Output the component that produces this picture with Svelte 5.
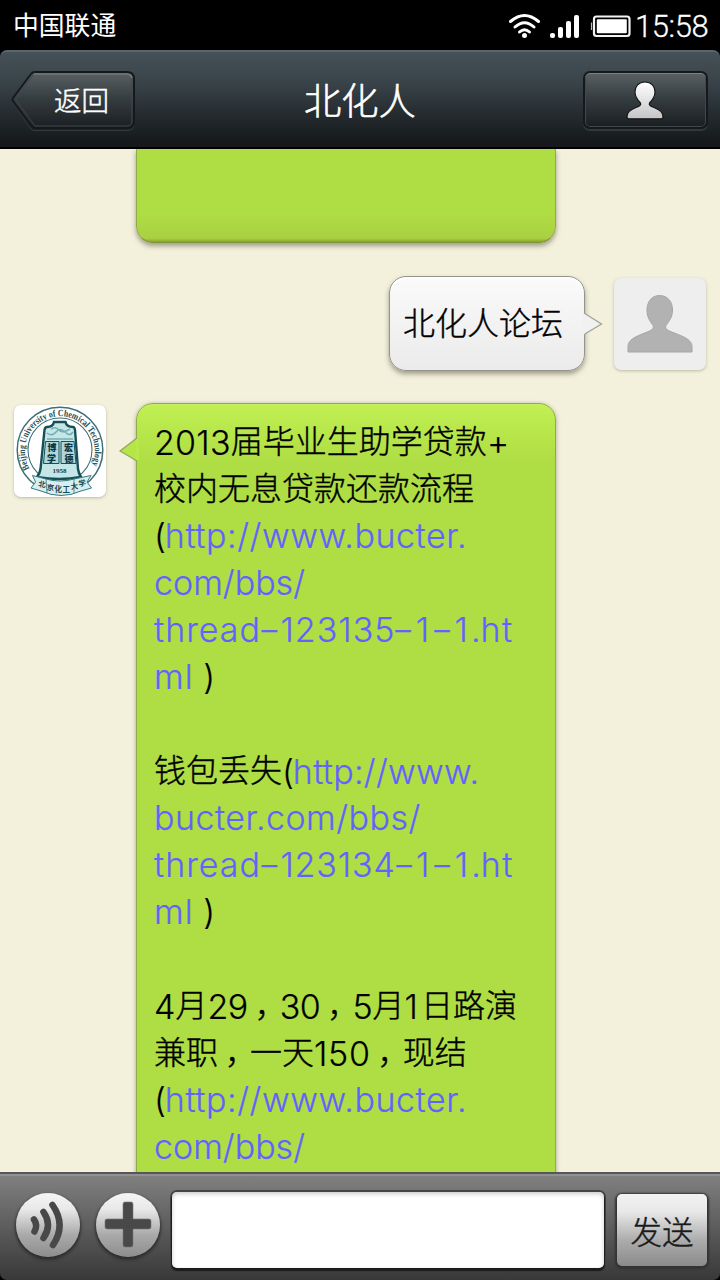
<script>
  // Each run is [text, kind, width]; kinds: c = Chinese, n = Latin text, a = link,
  // d = link dash, p = Chinese comma
  const thread = (id) => [
    ['thread', 'a', 107], ['-', 'd', 19], [id, 'a', 115], ['-', 'd', 20], ['1', 'a', 18],
    ['-', 'd', 20], ['1', 'a', 16], ['.', 'a', 10], ['ht', 'a', 33]
  ];
  const lines = [
    [['2013', 'n', 77], ['届毕业生助学贷款', 'c', 256], ['+', 'n', 22]],
    [['校内无息贷款还款流程', 'c', 320]],
    [['(', 'n', 11], ['http://www.bucter.', 'a', 302]],
    [['com/bbs/', 'a', 151]],
    thread('123135'),
    [['ml', 'a', 40], [' )', 'n', 21]],
    [],
    [['钱包丢失', 'c', 128], ['(', 'n', 11], ['http://www.', 'a', 186]],
    [['bucter.com/bbs/', 'a', 267]],
    thread('123134'),
    [['ml', 'a', 40], [' )', 'n', 21]],
    [],
    [['4', 'n', 21], ['月', 'c', 32], ['29', 'n', 40], ['，', 'p', 32], ['30', 'n', 41], ['，', 'p', 32], ['5', 'n', 20], ['月', 'c', 32], ['1', 'n', 16], ['日路演', 'c', 96]],
    [['兼职', 'c', 64], ['，', 'p', 32], ['一天', 'c', 64], ['150', 'n', 57], ['，', 'p', 32], ['现结', 'c', 64]],
    [['(', 'n', 11], ['http://www.bucter.', 'a', 302]],
    [['com/bbs/', 'a', 151]]
  ];

  // Spreads the letters of a run over the given width
  function fit(node, width) {
    const natural = node.offsetWidth;
    node.style.letterSpacing = (width - natural) / node.textContent.length + 'px';
  }
</script>

<div class="screen">
  <div class="status">
    <span class="carrier">中国联通</span>
    <svg class="signals" width="124" height="30" viewBox="508 12 124 30">
      <g fill="none" stroke="#fff" stroke-width="3" stroke-linecap="round">
        <path d="M510.500 21.500Q524.500 9.500 538.500 21.500" />
        <path d="M515 27Q524.500 18.500 534 27" />
        <path d="M519.500 32Q524.500 27.500 529.500 32" />
      </g>
      <circle cx="524.500" cy="35.500" r="2.500" fill="#fff" />
      <g fill="#fff">
        <rect x="550" y="33" width="5" height="5" rx="2" />
        <rect x="558" y="27" width="5" height="11" rx="2" />
        <rect x="566" y="21" width="5" height="17" rx="2" />
        <rect x="574" y="15" width="5" height="23" rx="2" />
      </g>
      <rect x="594" y="16.500" width="35.500" height="19.500" rx="2.500" fill="#000" stroke="#f4f4f4" stroke-width="2.200" />
      <rect x="596.800" y="19.200" width="30" height="14" rx="1" fill="#fff" />
      <path d="M591.500 22.500v7.500" stroke="#bbb" stroke-width="1.200" />
    </svg>
    <span class="clock" use:fit={73}>15:58</span>
  </div>

  <header>
    <button class="back" aria-label="返回">
      <svg width="126" height="64" viewBox="10 69 126 64">
        <defs>
          <linearGradient id="btn" x1="0" y1="0" x2="0" y2="1">
            <stop offset="0" stop-color="#596165" /><stop offset=".5" stop-color="#343b3f" /><stop offset="1" stop-color="#1a1e21" />
          </linearGradient>
        </defs>
        <path d="M34 73.500H127Q134 73.500 134 80V124Q134 130.500 127 130.500H34Q32 130.500 30.500 128L12 101Z" fill="none" stroke="#485156" stroke-opacity=".55" />
        <path d="M35 72H127Q134 72 134 79V121Q134 128 127 128H35Q32.500 128 31 126L13 101Q12 99.500 13 98L31 74Q32.500 72 35 72Z" fill="url(#btn)" stroke="#15191b" stroke-width="2" />
        <path d="M34 74H127Q131 74 132 78" fill="none" stroke="#7c8386" stroke-width="1.200" />
        <path d="M132 78V121Q132 126 127 126H35L15.500 99.500L33 75" fill="none" stroke="#41484c" />
      </svg>
      <span>返回</span>
    </button>
    <h1>北化人</h1>
    <button class="profile" aria-label="profile">
      <svg width="40" height="42" viewBox="0 0 40 42">
        <defs><linearGradient id="man" x1="0" y1="0" x2="0" y2="1"><stop stop-color="#fff" /><stop offset="1" stop-color="#c5c5c5" /></linearGradient></defs>
        <path d="M20 2C13.500 2 10 6.500 10 12C10 17 12.500 20 15.500 23C16.500 25 14.500 26 11 27.500C5 30 2 32 2 37Q2 38.800 4 38.800H36Q38 38.800 38 37C38 32 35 30 29 27.500C25.500 26 23.500 25 24.500 23C27.500 20 30 17 30 12C30 6.500 26.500 2 20 2Z" fill="url(#man)" stroke="#14181a" stroke-width="1.200" />
      </svg>
    </button>
  </header>

  <main>
    <div class="bubble green tail-end"></div>

    <div class="mine">
      <div class="bubble white">
        北化人论坛
        <svg class="tip" width="22" height="30" viewBox="0 0 22 30"><path d="M1 4L18.500 15L1 25.500" fill="#f1f1f1" stroke="#a3a39b" stroke-width="1.300" /><path d="M0 5V25" stroke="#f1f1f1" stroke-width="3" /></svg>
      </div>
      <div class="avatar plain">
        <svg width="92" height="92" viewBox="614 278 92 92">
          <path d="M659.500 295.500C651.500 295.500 647 302 647 310C647 317.500 650 321 653 325.500C654.500 329 651 330.500 646 332.500C634 337 628 340 628 347V352H692V347C692 340 685 337 673 332.500C668 330.500 664.500 329 666 325.500C669 321 672.500 317.500 672.500 310C672.500 302 668 295.500 659.500 295.500Z" fill="#b2b2b2" stroke="#a6a6a6" />
        </svg>
      </div>
    </div>

    <div class="theirs">
      <div class="avatar school">
        <svg width="92" height="92" viewBox="0 0 92 92">
          <defs><path id="ring" d="M15.500 63.500A35 35 0 1 1 74 67" /></defs>
          <circle cx="46" cy="45" r="42.800" fill="#fff" stroke="#3e7076" stroke-width="1.500" />
          <circle cx="46" cy="45" r="32" fill="#fff" stroke="#3e7076" stroke-width="1.100" />
          <text class="motto"><textPath href="#ring" textLength="142" lengthAdjust="spacingAndGlyphs">Beijing University of Chemical Technology</textPath></text>
          <path d="M33 22Q39 22 40 17H51.500Q52.500 22 59 22Q60.500 22 61 25L64 64Q64.500 68 67 72Q45 76 23 72Q26 68 26.500 64L30.500 25Q31 22 33 22Z" fill="#c5e6e7" stroke="#164f58" stroke-width="2.400" />
          <path d="M33 28q5 4 9-1t9 0t8 0M37 24q5-3 8 1t11-1M33 34H59" fill="none" stroke="#75aeb2" stroke-width="1.500" />
          <path d="M31.500 36.500H45V58.500H29.500ZM47 36.500H60L62 58.500H47Z" fill="#aed8da" stroke="#164f58" stroke-width="1" />
          <g class="seal"><text x="33.500" y="46">博</text><text x="33" y="56.500">学</text><text x="50" y="46">宏</text><text x="50.500" y="56.500">德</text></g>
          <text class="year" x="38.500" y="68" textLength="14">1958</text>
          <path d="M18.500 70.500L32 74Q46 78 60 74L77 70.500L73 77L77.500 83L67 86Q47 95 27 86L17 83L21.500 77Z" fill="#d7eef0" stroke="#367880" />
          <path d="M32 74L33 88M60 74L60 88.500" stroke="#367880" stroke-width=".8" />
          <g class="ribbon"><text x="24" y="81.500" transform="rotate(8 24 81.500)">北</text><text x="32.500" y="85" transform="rotate(5 32.500 85)">京</text><text x="40.500" y="86.500">化</text><text x="48.500" y="86.500">工</text><text x="57" y="84.500" transform="rotate(-7 57 84.500)">大</text><text x="65" y="81.500" transform="rotate(-10 65 81.500)">学</text></g>
        </svg>
      </div>
      <div class="bubble green long">
        <svg class="tail" width="22" height="30" viewBox="0 0 22 30"><path d="M20 3L3 16L20 26" fill="#b6e54a" stroke="#91a65c" stroke-width="1.200" /><path d="M20.500 4V25" stroke="#b7e94a" stroke-width="3" /></svg>
        {#each lines as line}
          <div class="line">{#each line as [text, kind, width]}<span class={kind} use:fit={width}>{text}</span>{/each}</div>
        {/each}
      </div>
    </div>
  </main>

  <footer>
    <button class="round" aria-label="voice">
      <svg width="64" height="64" viewBox="0 0 64 64"><g fill="none" stroke="#484848" stroke-width="6.500" stroke-linecap="round"><path d="M18 26.500Q22 32 18.500 38.500" /><path d="M27.500 19Q36.500 32 27.500 45" /><path d="M36.500 12Q50.500 32 37 52" /></g></svg>
    </button>
    <button class="round" aria-label="add">
      <svg width="64" height="64" viewBox="0 0 64 64"><path d="M29 9H35Q37 9 37 11V26H53Q55 26 55 28V34Q55 36 53 36H37V52Q37 54 35 54H29Q27 54 27 52V36H11Q9 36 9 34V28Q9 26 11 26H27V11Q27 9 29 9Z" fill="#494949" stroke="#777" stroke-width=".6" /></svg>
    </button>
    <div class="field"></div>
    <button class="send">发送</button>
  </footer>
</div>

<style>
  :global(body) { background: #000; }
  * { box-sizing: border-box; }
  .screen { width: 720px; height: 1280px; display: flex; flex-direction: column; overflow: hidden; background: #000; font-family: "Noto Sans CJK SC", sans-serif; font-weight: 300; }
  button { border: 0; padding: 0; font: inherit; display: block; }
  svg { display: block; }
  .status { height: 50px; flex: none; display: flex; color: #fff; padding-left: 13px; }
  .carrier { font-size: 25.800px; line-height: 48px; width: 495px; font-weight: 400; }
  .signals { margin-top: 12px; }
  .clock { font: 300 31px/54px Roboto, sans-serif; align-self: flex-start; margin-left: 3px; white-space: nowrap; -webkit-text-stroke: .3px; }

  header { height: 99px; flex: none; display: flex; justify-content: space-between; padding: 19px 12px 0 10px; border-radius: 7px 7px 0 0; background: linear-gradient(#465157, #3a454b 30%, #252c30 65%, #15191b 95%); border-top: 2px solid #59666b; border-bottom: 2px solid #000; color: #fff; }
  .back { background: none; color: #fff; display: grid; width: 126px; height: 64px; margin-top: -2px; }
  .back svg, .back span { grid-area: 1 / 1; }
  .back span { font-size: 27.500px; line-height: 60px; padding-left: 44px; text-align: left; -webkit-text-stroke: .5px; }
  h1 { margin: 0 0 0 3px; font-size: 37.300px; line-height: 56px; font-weight: 300; width: 114px; white-space: nowrap; -webkit-text-stroke: .6px; }
  .profile { width: 125px; height: 58px; border-radius: 7px; border: 2px solid #15191b; background: linear-gradient(#596165, #343b3f 50%, #1a1e21); box-shadow: inset 0 1px #7c8386, inset 0 0 0 1px #41484c, 0 2px #32393d; display: flex; justify-content: center; padding: 7px 2px 0 0; }

  main { flex: 1; min-height: 0; overflow: hidden; background: #f3f0db; }
  .bubble { position: relative; border-radius: 17px; }
  .green { width: 420px; background: #afdd44; border: 1px solid #8fab4c; box-shadow: 0 2px 5px #6c6c5380; }
  .tail-end { height: 94px; margin-left: 136px; border-top: 0; border-radius: 0 0 17px 17px; background: linear-gradient(#afdd44 70%, #a9d042 96%, #86a52b); box-shadow: 0 3px 5px #5e5e4b90; border-bottom: 1px solid #7d9336; }
  .mine { display: flex; justify-content: flex-end; padding: 33px 14px 0 0; gap: 29px; align-items: flex-start; }
  .white { width: 196px; height: 95px; padding-left: 13px; font-size: 32px; line-height: 89px; color: #000; background: linear-gradient(#fafafa, #ebebeb); border: 1.500px solid #94948c; box-shadow: 0 3px 5px #5e5e4b90, inset 0 2px #fff; white-space: nowrap; -webkit-text-stroke: .4px; }
  .tip { position: absolute; left: 193px; top: 32px; }
  .tail { position: absolute; left: -20px; top: 31px; }
  .avatar { width: 92px; height: 92px; border-radius: 7px; margin-top: 2px; flex: none; overflow: hidden; box-shadow: 0 1px 3px #86867880; }
  .plain { background: #eee; }
  .school { background: #fff; }
  .theirs { display: flex; padding-left: 14px; gap: 30px; margin-top: 32px; align-items: flex-start; }
  .long { padding: 14px 0 60px 17px; background: linear-gradient(#c0f052, #afdd44 58px); box-shadow: 0 1px 4px #6c6c5390, inset 0 1px #c7f068; }
  .line { height: 47px; display: flex; align-items: baseline; line-height: 47px; white-space: pre; color: #000; }
  .c, .p { font-size: 32px; position: relative; top: -2px; -webkit-text-stroke: .4px; }
  .p { left: 7px; }
  .n, .a, .d { font-family: Inter, "Noto Sans CJK SC", sans-serif; font-size: 34px; font-weight: 300; -webkit-text-stroke: .2px; }
  .a, .d { color: #6262ff; }
  .d { transform: translateX(1px) scaleX(1.5); transform-origin: 45% 50%; }
  .motto { font: bold 9.500px "Liberation Serif", serif; fill: #244e55; }
  .seal { font: 900 9px "Noto Sans CJK SC", sans-serif; fill: #0e3540; }
  .year { font: bold 7px "Liberation Serif", serif; fill: #16434c; }
  .ribbon { font: bold 7.500px "Noto Sans CJK SC", sans-serif; fill: #1c4a55; }

  footer { height: 108px; flex: none; display: flex; align-items: flex-start; padding: 16px 12px 0 16px; background: linear-gradient(#818181, #383838); border-top: 2px solid #565656; box-shadow: inset 0 2px #929292; border-radius: 0 0 7px 7px; }
  .round { width: 64px; height: 64px; border-radius: 50%; background: linear-gradient(#f4f4f4, #e9e9e9 25%, #aaa 65%, #8d8d8d); box-shadow: 0 2px 3px 1px #2e2e2e; margin: 3px 16px 0 0; }
  .field { width: 432px; height: 76px; margin: 2px 0 0 -4px; border-radius: 5px; background: #fff; box-shadow: 0 2px 1px 1px #1c1c1c, 0 0 0 2px #444, inset 0 2px 4px #ccc; }
  .send { width: 90px; height: 72px; margin: 4px 0 0 13px; border-radius: 5px; background: linear-gradient(#f2f2f2, #e8e8e8 25%, #ababab 65%, #8b8b8b); box-shadow: 0 1px 2px 2px #333; font-size: 31.500px; line-height: 70px; color: #1a1a1a; text-align: center; white-space: nowrap; -webkit-text-stroke: .4px; }
</style>
